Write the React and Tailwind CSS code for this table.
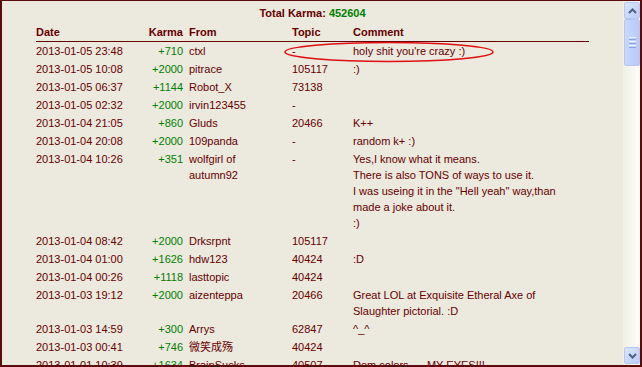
import React from 'react';

const rows = [
  { date: '2013-01-05 23:48', karma: '+710', from: ['ctxl'], topic: '-', comment: ["holy shit you're crazy :)"] },
  { date: '2013-01-05 10:08', karma: '+2000', from: ['pitrace'], topic: '105117', comment: [':)'] },
  { date: '2013-01-05 06:37', karma: '+1144', from: ['Robot_X'], topic: '73138', comment: [] },
  { date: '2013-01-05 02:32', karma: '+2000', from: ['irvin123455'], topic: '-', comment: [] },
  { date: '2013-01-04 21:05', karma: '+860', from: ['Gluds'], topic: '20466', comment: ['K++'] },
  { date: '2013-01-04 20:08', karma: '+2000', from: ['109panda'], topic: '-', comment: ['random k+ :)'] },
  {
    date: '2013-01-04 10:26',
    karma: '+351',
    from: ['wolfgirl of', 'autumn92'],
    topic: '-',
    comment: [
      'Yes,I know what it means.',
      'There is also TONS of ways to use it.',
      'I was useing it in the "Hell yeah" way,than',
      'made a joke about it.',
      ':)',
    ],
  },
  { date: '2013-01-04 08:42', karma: '+2000', from: ['Drksrpnt'], topic: '105117', comment: [] },
  { date: '2013-01-04 01:00', karma: '+1626', from: ['hdw123'], topic: '40424', comment: [':D'] },
  { date: '2013-01-04 00:26', karma: '+1118', from: ['lasttopic'], topic: '40424', comment: [] },
  {
    date: '2013-01-03 19:12',
    karma: '+2000',
    from: ['aizenteppa'],
    topic: '20466',
    comment: ['Great LOL at Exquisite Etheral Axe of', 'Slaughter pictorial. :D'],
  },
  { date: '2013-01-03 14:59', karma: '+300', from: ['Arrys'], topic: '62847', comment: ['^_^'] },
  { date: '2013-01-03 00:41', karma: '+746', from: ['微笑成殇'], topic: '40424', comment: [] },
  { date: '2013-01-01 10:39', karma: '+1634', from: ['BrainSucks'], topic: '40507', comment: ['Dem colors..... MY EYES!!!'] },
];

const Lines = ({ items }) => items.map((t, i) => <div key={i} className="h-4 whitespace-pre">{t}</div>);

const Arrow = ({ up }) => (
  <svg width="9" height="6" viewBox="0 0 9 6">
    <path
      d={up ? 'M1 5 L4.5 1.5 L8 5' : 'M1 1 L4.5 4.5 L8 1'}
      fill="none"
      stroke="#4d6185"
      strokeWidth="2"
    />
  </svg>
);

const ScrollBar = () => (
  <div className="w-[17px] flex flex-col bg-gradient-to-r from-[#f1efe6] to-[#fdfdfa] py-[1px] pl-[1px]">
    <div className="h-[17px] rounded-[2px] border border-[#b4c8f6] bg-gradient-to-br from-[#dce6fd] to-[#b7cdf9] flex items-center justify-center">
      <Arrow up />
    </div>
    <div className="h-[47px] rounded-[2px] border border-[#b4c8f6] bg-gradient-to-r from-[#c9d8fc] to-[#b7cbf8] flex flex-col items-center justify-center gap-[1px]">
      <div className="w-[7px] h-px bg-[#eef3fe]" />
      <div className="w-[7px] h-px bg-[#8ca6e0]" />
      <div className="w-[7px] h-px bg-[#eef3fe]" />
      <div className="w-[7px] h-px bg-[#8ca6e0]" />
      <div className="w-[7px] h-px bg-[#eef3fe]" />
      <div className="w-[7px] h-px bg-[#8ca6e0]" />
    </div>
    <div className="flex-1" />
    <div className="h-[17px] rounded-[2px] border border-[#b4c8f6] bg-gradient-to-br from-[#dce6fd] to-[#b7cdf9] flex items-center justify-center">
      <Arrow />
    </div>
  </div>
);

export default function App() {
  return (
    <div
      className="w-[642px] h-[367px] flex border-l-2 border-t border-b-2 border-r-2 border-[#5c0b0b] bg-[#ece9df] text-[11px] text-[#660000] overflow-hidden"
      style={{ fontFamily: '"Liberation Sans", "Noto Sans CJK SC", sans-serif' }}
    >
      <div className="flex-1 relative overflow-hidden pl-[34px] pr-[34px]">
        <div className="pt-[4px] h-[21px] text-center font-bold leading-4">
          Total Karma: <span className="text-[#008000]">452604</span>
        </div>
        <div className="mt-[2px] flex leading-4 font-bold border-b border-[#660000] pb-[1px]">
          <div className="w-[100px]">Date</div>
          <div className="w-[50px] text-right pr-[3px]">Karma</div>
          <div className="w-[106px] pl-[3px]">From</div>
          <div className="w-[61px]">Topic</div>
          <div className="flex-1">Comment</div>
        </div>
        {rows.map((r, i) => (
          <div key={i} className="flex leading-4 py-[1px]">
            <div className="w-[100px] whitespace-nowrap">{r.date}</div>
            <div className="w-[50px] text-right pr-[3px] text-[#008000]">{r.karma}</div>
            <div className="w-[106px] pl-[3px]"><Lines items={r.from} /></div>
            <div className="w-[61px]">{r.topic}</div>
            <div className="flex-1"><Lines items={r.comment} /></div>
          </div>
        ))}
        <svg className="absolute left-[280px] top-[40px]" width="214" height="24" viewBox="0 0 214 24">
          <ellipse cx="107" cy="11" rx="104" ry="9.5" fill="none" stroke="#e01010" strokeWidth="1.6" />
        </svg>
      </div>
      <ScrollBar />
    </div>
  );
}
